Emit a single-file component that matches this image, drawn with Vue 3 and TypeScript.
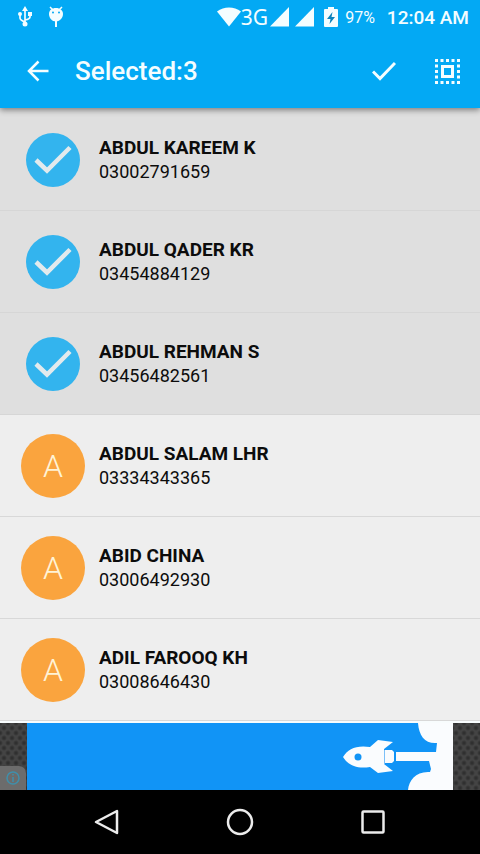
<script setup lang="ts">
import { computed, ref } from 'vue'

interface Contact {
  name: string
  phone: string
  selected: boolean
}

const contacts = ref<Contact[]>([
  { name: 'ABDUL KAREEM K', phone: '03002791659', selected: true },
  { name: 'ABDUL QADER KR', phone: '03454884129', selected: true },
  { name: 'ABDUL REHMAN S', phone: '03456482561', selected: true },
  { name: 'ABDUL SALAM LHR', phone: '03334343365', selected: false },
  { name: 'ABID CHINA', phone: '03006492930', selected: false },
  { name: 'ADIL FAROOQ KH', phone: '03008646430', selected: false },
])

const selectedCount = computed(() => contacts.value.filter((c) => c.selected).length)

function toggle(contact: Contact) {
  contact.selected = !contact.selected
}

function selectAll() {
  contacts.value.forEach((c) => (c.selected = true))
}
</script>

<template>
  <div class="screen">
    <header class="top">
      <div class="status">
        <div class="notices">
          <svg width="14" height="22" viewBox="0 0 14 22" fill="none" stroke="currentColor" stroke-width="1.700">
            <path d="M7 3v15M2 9v3q0 2 5 4M12 8v3q0 2-5 3" />
            <path d="M7 0l3 5H4zM10 6h4v4h-4z" fill="currentColor" stroke="none" />
            <circle cx="2" cy="8" r="2" fill="currentColor" stroke="none" />
            <circle cx="7" cy="18" r="2.500" fill="currentColor" stroke="none" />
          </svg>
          <svg width="16" height="22" viewBox="0 0 16 22">
            <path d="M2 1l3 3M14 1l-3 3" stroke="currentColor" stroke-width="1.500" />
            <path d="M8 2c4 0 7 2.500 7 6s-3 7.500-7 7.500S1 12 1 8s3-6 7-6z" fill="currentColor" />
            <path d="M8 15v6" stroke="currentColor" stroke-width="2" />
            <circle cx="5" cy="6.500" r="1" fill="#03a9f4" />
            <circle cx="11" cy="6.500" r="1" fill="#03a9f4" />
          </svg>
        </div>
        <div class="system">
          <svg class="wifi" width="24" height="20" viewBox="0 0 24 20" fill="currentColor">
            <path d="M0 4.500C7-1 17-1 24 4.500L12 19.500z" />
          </svg>
          <span class="network">3G</span>
          <svg class="signal" width="19" height="20" viewBox="0 0 19 20" fill="currentColor"><path d="M19 0v19.500H0z" /></svg>
          <svg class="signal second" width="19" height="20" viewBox="0 0 19 20" fill="currentColor"><path d="M19 0v19.500H0z" /></svg>
          <svg class="battery" width="14" height="20" viewBox="0 0 14 20">
            <path d="M4 0h6v2h3q1 0 1 1v16q0 1-1 1H1q-1 0-1-1V3q0-1 1-1h3z" fill="currentColor" />
            <path d="M8.500 5L3 12h3.500L5.500 17 11 10H7.500z" fill="#0b83bd" />
          </svg>
          <span class="percent">97%</span>
          <span class="time">12:04 AM</span>
        </div>
      </div>
      <div class="toolbar">
        <button class="icon-button" type="button" aria-label="Back">
          <svg width="22" height="22" viewBox="0 0 22 22" fill="none" stroke="currentColor" stroke-width="2.500">
            <path d="M21.500 11H2M11.500 1.500L2 11l9.500 9.500" />
          </svg>
        </button>
        <h1 class="title">Selected:{{ selectedCount }}</h1>
        <button class="icon-button" type="button" aria-label="Done">
          <svg width="24" height="20" viewBox="0 0 24 20" fill="none" stroke="currentColor" stroke-width="3">
            <path d="M1 10.500l7 7L23 2" />
          </svg>
        </button>
        <button class="icon-button all" type="button" aria-label="Select all" @click="selectAll">
          <svg width="25" height="25" viewBox="0 0 25 25" fill="none" stroke="currentColor">
            <path d="M0 1.500h25M0 23.500h25M1.500 0v25M23.500 0v25" stroke-width="3" stroke-dasharray="3 2.500" />
            <path d="M7.500 7.500h10v10h-10z" stroke-width="3" />
          </svg>
        </button>
      </div>
    </header>

    <ul class="list">
      <li v-for="contact in contacts" :key="contact.phone">
        <button
          class="row"
          :class="{ selected: contact.selected }"
          type="button"
          :aria-pressed="contact.selected"
          @click="toggle(contact)"
        >
          <span class="slot">
            <span v-if="contact.selected" class="avatar checked">
              <svg width="38" height="30" viewBox="0 0 38 30" fill="none" stroke="currentColor" stroke-width="4.500">
                <path d="M2 15l11 10.500L36 2.500" />
              </svg>
            </span>
            <span v-else class="avatar letter">{{ contact.name.charAt(0) }}</span>
          </span>
          <span class="details">
            <span class="name">{{ contact.name }}</span>
            <span class="phone">{{ contact.phone }}</span>
          </span>
        </button>
      </li>
    </ul>

    <aside class="ad" aria-label="Advertisement">
      <a class="banner" href="#" aria-label="Open advertisement">
        <svg width="110" height="67" viewBox="0 0 110 67" fill="#fafcfe">
          <path d="M75 0H110V67H65C66 57 73 48 87 49L88 46 86 38H53V29H93L94 20C82 21 76 13 75 0z" />
          <path d="M0 34C5 26 13 22 27 24L35 17 50 19 41 26V41L50 48 35 50 27 44C13 46 5 42 0 34z" />
          <path d="M42 27h7l2 2v9l-2 2h-7z" />
          <path d="M41.500 27v14" stroke="#7cc0f8" />
          <circle cx="15" cy="34" r="3.500" fill="#1194f6" />
        </svg>
      </a>
      <button class="ad-info" type="button" aria-label="About this ad">
        <svg width="14" height="14" viewBox="0 0 14 14" fill="none" stroke="#3f8fab" stroke-width="1.500">
          <circle cx="7" cy="7" r="6" />
          <path d="M7 3v1.500M7 6v5" />
        </svg>
      </button>
    </aside>

    <nav class="nav" aria-label="System">
      <button class="nav-button" type="button" aria-label="Back">
        <svg width="26" height="28" viewBox="0 0 26 28"><path d="M2 14L23 3v22z" /></svg>
      </button>
      <button class="nav-button" type="button" aria-label="Home">
        <svg width="28" height="28" viewBox="0 0 28 28"><circle cx="14" cy="14" r="12" /></svg>
      </button>
      <button class="nav-button" type="button" aria-label="Recent apps">
        <svg width="26" height="26" viewBox="0 0 26 26"><rect x="2.500" y="2.500" width="21" height="21" rx="1" /></svg>
      </button>
    </nav>
  </div>
</template>

<style>
body {
  margin: 0;
  background: #eee;
}
</style>

<style scoped>
.screen {
  display: flex;
  flex-direction: column;
  min-height: 100vh;
  background: #eee;
  color: #0c0c0c;
  font-family: Roboto, "Liberation Sans", sans-serif;
}

button {
  border: 0;
  padding: 0;
  background: none;
  color: inherit;
  font: inherit;
  cursor: pointer;
}

svg {
  display: block;
  flex: none;
}

.top {
  position: relative;
  background: #03a9f4;
  color: #f4fdff;
  box-shadow: 0 2px 6px rgba(0, 0, 0, 0.45);
}

.status {
  display: flex;
  justify-content: space-between;
  align-items: center;
  height: 34px;
  padding: 0 11px 0 18px;
}

.notices {
  display: flex;
  gap: 16px;
}

.system {
  display: flex;
  align-items: center;
}

.network {
  margin-right: 2px;
  font-family: "Noto Sans", sans-serif;
  font-size: 21px;
  line-height: 24px;
}

.signal.second {
  margin-left: 6px;
}

.battery {
  margin: 0 7px 0 10px;
}

.percent {
  margin-right: 12px;
  font-size: 16px;
}

.time {
  font-size: 19px;
  font-weight: 500;
}

.toolbar {
  display: flex;
  align-items: center;
  height: 74px;
  padding: 0 20px 0 27px;
  box-sizing: border-box;
}

.title {
  flex: 1;
  margin: 0 0 0 26px;
  font-size: 26px;
  font-weight: 500;
  line-height: 32px;
}

.all {
  margin-left: 39px;
}

.list {
  flex: 1;
  margin: 0;
  padding: 0;
  border-top: 1px solid #dfdfdf;
  list-style: none;
}

.row {
  display: flex;
  align-items: center;
  gap: 14px;
  width: 100%;
  height: 102px;
  padding: 0 21px;
  border-bottom: 1px solid #d8d8d8;
  text-align: left;
}

.row.selected {
  background: #dfdfdf;
  border-color: #d6d6d6;
}

.slot {
  display: flex;
  justify-content: center;
  width: 64px;
}

.avatar {
  display: flex;
  align-items: center;
  justify-content: center;
  border-radius: 50%;
}

.checked {
  width: 54px;
  height: 54px;
  background: #33b4ee;
  color: #e2eaed;
}

.letter {
  width: 64px;
  height: 64px;
  background: #faa43e;
  color: #fff3d6;
  font-size: 32px;
  font-weight: 300;
}

.details {
  display: flex;
  flex-direction: column;
}

.name {
  font-size: 19px;
  font-weight: 700;
  line-height: 25px;
}

.phone {
  font-size: 18px;
  line-height: 24px;
}

.ad {
  position: relative;
  padding: 0 27px;
  border-top: 2px solid #f8fcfd;
  background-color: #444;
  background-image: radial-gradient(circle, #303030 1px, transparent 3px), radial-gradient(circle, #303030 1px, transparent 3px);
  background-position: 0 0, 4px 5px;
  background-size: 8px 10px;
}

.banner {
  display: flex;
  justify-content: flex-end;
  background: #1194f6;
}

.ad-info {
  position: absolute;
  left: 0;
  bottom: 0;
  display: flex;
  align-items: center;
  justify-content: center;
  width: 26px;
  height: 24px;
  border-radius: 0 7px 0 0;
  background: #6c6c6c;
}

.nav {
  display: flex;
  justify-content: center;
  height: 64px;
  background: #000;
}

.nav-button {
  display: flex;
  align-items: center;
  justify-content: center;
  flex: 0 1 133px;
}

.nav-button svg {
  fill: none;
  stroke: #ececec;
  stroke-width: 2.5;
  stroke-linejoin: round;
}
</style>
